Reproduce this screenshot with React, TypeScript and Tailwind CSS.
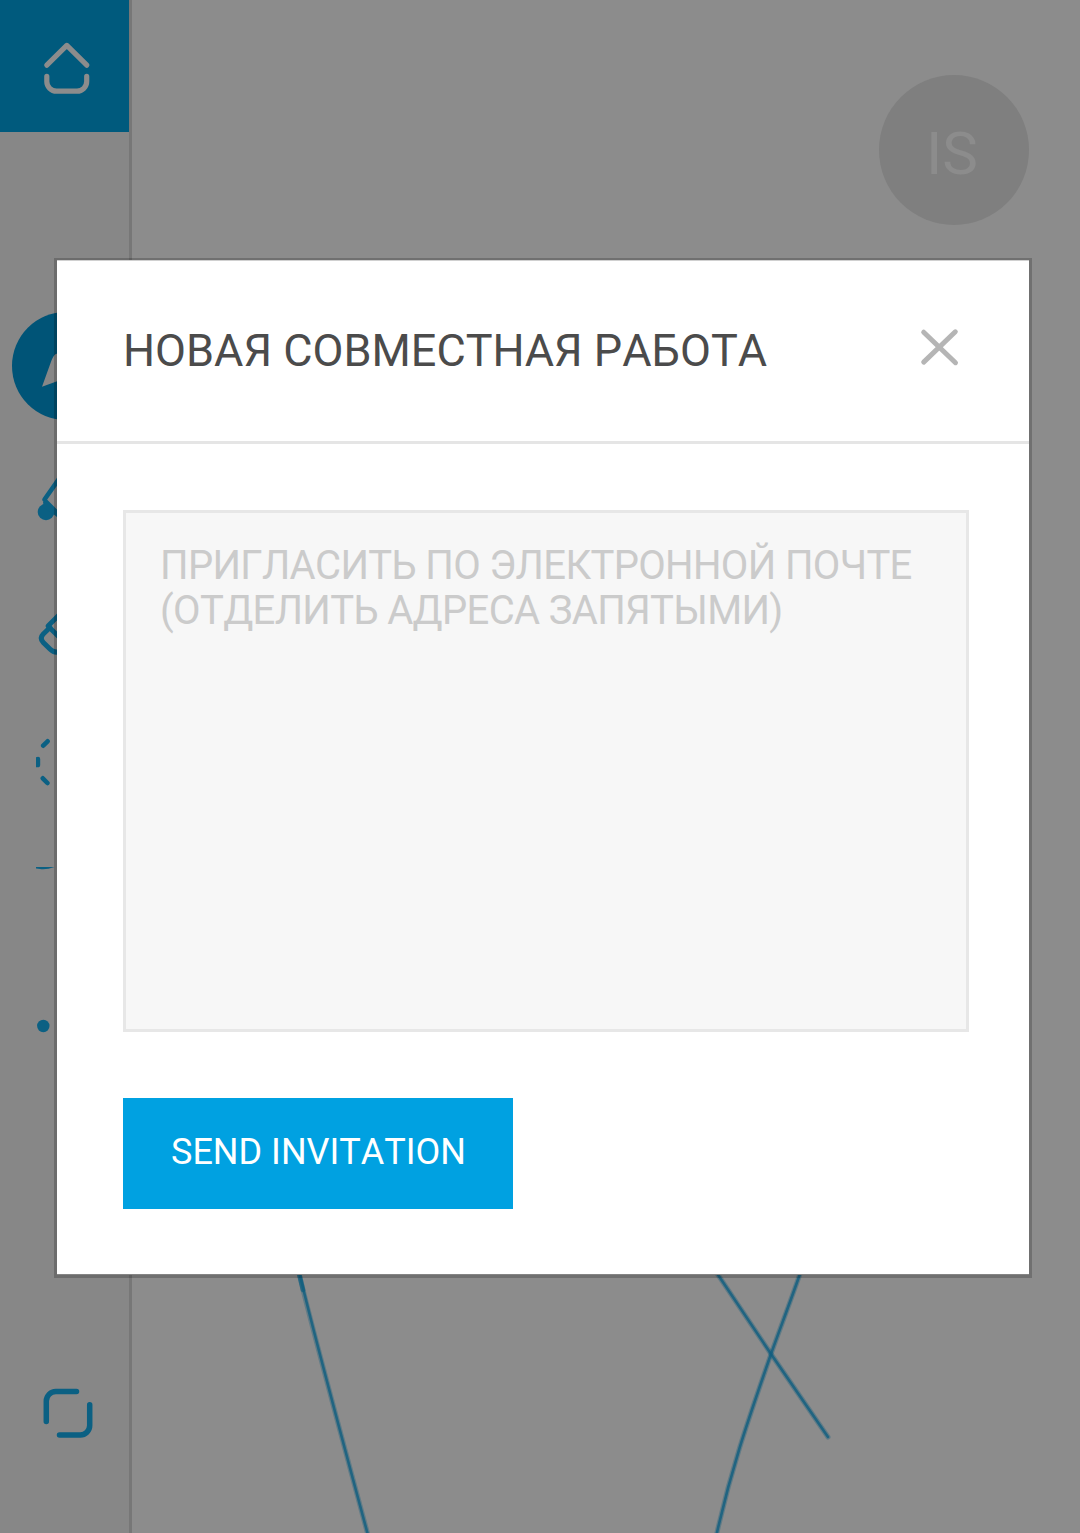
import type { ReactNode } from "react";

const INK = "#0b6083";

/* One square slot of the tool rail; `top` is the y origin of its drawing space. */
function RailSlot({ top, label, children }: { top: number; label: string; children: ReactNode }) {
  return (
    <button aria-label={label} className="block h-[132px] w-[129px] shrink-0">
      <svg viewBox={`0 ${top} 129 132`} width="129" height="132" fill="none" stroke={INK} strokeLinecap="round" strokeLinejoin="round">
        {children}
      </svg>
    </button>
  );
}

function ToolRail() {
  return (
    <nav className="flex h-full w-[132px] shrink-0 flex-col border-r-[3px] border-[#777777] bg-[#878787]">
      <div className="h-[132px] bg-[#005a7d]">
        <RailSlot top={0} label="Home">
          <g stroke="#8c8c8c" strokeWidth="5.2">
            <path d="M46.8 65.2 66.8 45.4 86.8 65.2" />
            <path d="M46.8 76.4V81.5a9.7 9.7 0 0 0 9.7 9.7H77a9.7 9.7 0 0 0 9.7-9.7V76.4" />
          </g>
        </RailSlot>
      </div>
      <div className="mt-[168px] flex flex-col">
        <RailSlot top={300} label="Pen">
          <circle cx="66" cy="366" r="54" fill="#005477" stroke="none" />
          <path d="M42 386.8 50.2 364C52.5 357.5 54 354 58 353.3L72 364 66 378Z" fill="#878787" stroke="none" />
        </RailSlot>
        <RailSlot top={432} label="Brush">
          <circle cx="46" cy="512" r="8.3" fill={INK} stroke="none" />
          <path d="M62 474.6 44.5 499.5" strokeWidth="4.6" />
          <path d="M43 502 46.5 499 62 514.5V521L54.5 515 44 508Z" fill={INK} stroke="none" />
        </RailSlot>
        <RailSlot top={564} label="Eraser">
          <path d="M60 614 48 626 60 638" strokeWidth="4.8" />
          <path d="M50 627.5 43.3 634Q39.2 638.2 43.3 642.4L50.2 649.3Q54.4 653.5 60 651.5" strokeWidth="5" />
        </RailSlot>
        <RailSlot top={696} label="Select">
          <path d="M47.6 741.3 43.2 745.7M42.8 778.3 47.4 783" strokeWidth="4.6" />
          <path d="M36 757.2Q40.2 756 40.2 759V765Q40.2 768 36 767.2Z" fill={INK} stroke="none" />
        </RailSlot>
        <RailSlot top={828} label="Shape">
          <path d="M36 867H54.5Q46 870 40 869L36 868.4Z" fill={INK} stroke="none" />
        </RailSlot>
        <RailSlot top={960} label="Size">
          <circle cx="43.3" cy="1026" r="6.2" fill={INK} stroke="none" />
        </RailSlot>
      </div>
      <div className="mt-auto mb-[54px]">
        <RailSlot top={1347} label="Fullscreen">
          <g strokeWidth="5.5">
            <path d="M76.5 1391.6H55.8a9.5 9.5 0 0 0-9.5 9.5V1421.4" />
            <path d="M89.7 1404.8V1425.6a9.5 9.5 0 0 1-9.5 9.5H59.5" />
          </g>
        </RailSlot>
      </div>
    </nav>
  );
}

function Whiteboard() {
  return (
    <main className="relative min-w-0 flex-1 bg-[#8c8c8c]">
      <svg className="absolute inset-0" viewBox="132 0 948 1533" width="948" height="1533" fill="none" stroke="#105e7f" strokeLinecap="round">
        <g strokeWidth="5" strokeOpacity="0.35">
          <path d="M298.5 1271C305 1300 330 1394 368.5 1537" />
          <path d="M715.5 1271 771 1354 828 1437" />
          <path d="M801 1271C791 1300 778 1334 771 1354C750 1415 732 1465 716 1537" />
        </g>
        <g strokeWidth="2.6" strokeOpacity="0.8">
          <path d="M299 1271C306 1302 330 1394 368.5 1537" />
          <path d="M715.5 1271 771 1354 828 1437" />
          <path d="M801 1271C791 1300 778 1334 771 1354C750 1415 732 1465 716 1537" />
        </g>
        <path d="M298.5 1271 303 1290" strokeWidth="4.5" strokeOpacity="0.7" />
      </svg>
      <div className="mt-[75px] mr-[51px] ml-auto flex size-[150px] items-center justify-center rounded-full bg-[#7f7f7f] text-[60px] leading-none text-[#8c8c8c]">
        <span className="pt-2 pr-1">IS</span>
      </div>
    </main>
  );
}

function InviteDialog() {
  return (
    <section role="dialog" aria-label="НОВАЯ СОВМЕСТНАЯ РАБОТА" className="flex h-[1020px] w-[978px] flex-col border-[3px] border-t-2 border-black/20 bg-white bg-clip-padding">
      <header className="flex h-[184px] items-start justify-between border-t border-b-[3px] border-t-[#d0d0d0] border-b-[#e5e5e5] pr-[69px] pl-[66px]">
        <h1 className="mt-[63px] text-[45px] leading-[54px] whitespace-nowrap text-[#4b4b4b]">НОВАЯ СОВМЕСТНАЯ РАБОТА</h1>
        <button aria-label="Close" className="mt-[66px]">
          <svg width="42" height="42" viewBox="918 327 42 42" stroke="#b5b5b5" strokeWidth="5" strokeLinecap="round">
            <path d="M923.7 332.2 955.5 362.7M955.3 331.8 923.7 362.1" />
          </svg>
        </button>
      </header>
      <div className="flex flex-1 flex-col items-start border-b border-[#858585] px-[66px] pt-[66px]">
        <textarea
          className="block h-[522px] w-[846px] resize-none border-[3px] border-[#e7e7e7] bg-[#f7f7f7] px-[34px] py-[30px] text-[40px] leading-[45px] tracking-[-0.65px] text-[#4b4b4b] outline-none placeholder:text-[#cbcbcb] placeholder:opacity-100"
          placeholder={"ПРИГЛАСИТЬ ПО ЭЛЕКТРОННОЙ ПОЧТЕ (ОТДЕЛИТЬ АДРЕСА ЗАПЯТЫМИ)"}
        />
        <button className="mt-[66px] flex h-[111px] w-[390px] items-center justify-center bg-[#00a1e1] text-[36px] leading-none text-white">
          <span className="pb-1 pl-px">SEND INVITATION</span>
        </button>
      </div>
    </section>
  );
}

export default function App() {
  return (
    <div className="relative flex h-[1533px] w-[1080px] overflow-hidden font-['Roboto',sans-serif] [font-kerning:none]">
      <ToolRail />
      <Whiteboard />
      <div className="absolute inset-0 flex items-start pt-[258px] pl-[54px]">
        <InviteDialog />
      </div>
    </div>
  );
}
